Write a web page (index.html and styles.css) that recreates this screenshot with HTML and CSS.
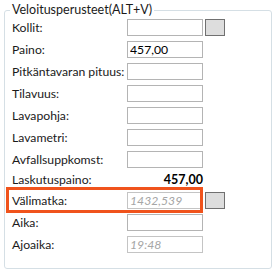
FILE: index.html
```html
<!DOCTYPE html>
<html lang="fi">
<head>
  <meta charset="UTF-8">
  <meta name="viewport" content="width=device-width, initial-scale=1.0">
  <title>Veloitusperusteet</title>
  <link rel="stylesheet" href="styles.css">
</head>
<body>
  <fieldset class="group">
    <legend>Veloitusperusteet(ALT+V)</legend>
    <div class="row">
      <label>Kollit:</label>
      <input class="field" type="text" value="">
      <button class="pick"></button>
    </div>
    <div class="row">
      <label>Paino:</label>
      <input class="field" type="text" value="457,00">
    </div>
    <div class="row">
      <label>Pitkäntavaran pituus:</label>
      <input class="field" type="text" value="">
    </div>
    <div class="row">
      <label>Tilavuus:</label>
      <input class="field" type="text" value="">
    </div>
    <div class="row">
      <label>Lavapohja:</label>
      <input class="field" type="text" value="">
    </div>
    <div class="row">
      <label>Lavametri:</label>
      <input class="field" type="text" value="">
    </div>
    <div class="row">
      <label>Avfallsuppkomst:</label>
      <input class="field" type="text" value="">
    </div>
    <div class="row total">
      <label>Laskutuspaino:</label>
      <span class="sum">457,00</span>
    </div>
    <div class="row marked">
      <label>Välimatka:</label>
      <input class="field" type="text" value="1432,539" disabled>
      <button class="pick"></button>
    </div>
    <div class="row">
      <label>Aika:</label>
      <input class="field" type="text" value="">
    </div>
    <div class="row">
      <label>Ajoaika:</label>
      <input class="field" type="text" value="19:48" disabled>
    </div>
  </fieldset>
</body>
</html>
```

FILE: styles.css
```css
body {
  margin: 3px 0 0 4px;
  background-color: #fff;
  font-family: Lato, "Open Sans", sans-serif;
  font-size: 12.2px;
  color: #1a1a1a;
}
.group {
  box-sizing: border-box;
  width: 268px;
  height: 266px;
  margin: 0;
  padding: 2px 0 0 7px;
  border: 1px solid #d5dfe5;
  border-radius: 3px;
}
.group legend {
  margin-left: -2px;
  padding: 0 2px;
  line-height: 14px;
  font-size: 12.5px;
  color: #1a1a1a;
}
.row {
  display: grid;
  grid-template-columns: 113px 76px 20px;
  column-gap: 2px;
  align-items: center;
  height: 17px;
  margin-bottom: 5px;
}
.row label {
  white-space: nowrap;
  line-height: 14px;
}
.field {
  box-sizing: border-box;
  width: 76px;
  height: 17px;
  margin: 0;
  padding: 0 2px;
  border: 1px solid #b4b4b4;
  border-radius: 0;
  background-color: #fff;
  font-family: inherit;
  font-size: 12.2px;
  color: #000;
  outline: none;
}
.field:disabled {
  border-color: #c4c4c4;
  color: #a6a6a6;
  font-style: italic;
}
.pick {
  box-sizing: border-box;
  width: 20px;
  height: 17px;
  margin: 0;
  padding: 0;
  border: 1px solid #707070;
  background-color: #dddddd;
}
.total {
  height: 14px;
}
.sum {
  text-align: right;
  font-weight: bold;
  font-size: 12.5px;
  line-height: 14px;
  color: #000;
}
.marked {
  position: relative;
}
.marked::after {
  content: "";
  position: absolute;
  left: -6px;
  top: -5px;
  width: 197px;
  height: 26px;
  box-sizing: border-box;
  border: 3px solid #f0531c;
  pointer-events: none;
}
```
